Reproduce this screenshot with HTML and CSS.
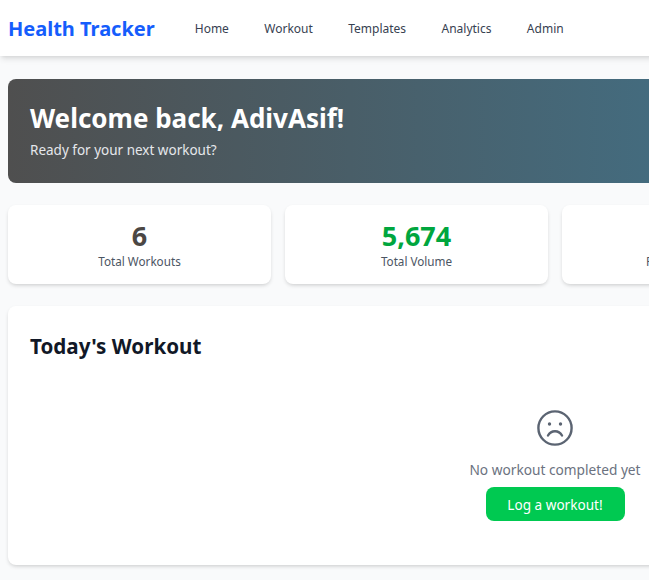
FILE: index.html
```html
<!DOCTYPE html>
<html lang="en">

<head>
    <meta charset="UTF-8">
    <meta name="viewport" content="width=device-width, initial-scale=1.0">
    <title>Health Tracker</title>
    <link rel="stylesheet" href="styles.css">
</head>

<body>
    <div class="page">
        <nav class="navbar">
            <a class="brand" href="#">Health Tracker</a>
            <div class="nav-links">
                <a href="#">Home</a>
                <a href="#">Workout</a>
                <a href="#">Templates</a>
                <a href="#">Analytics</a>
                <a href="#">Admin</a>
            </div>
        </nav>

        <main class="main-content">
            <section class="hero">
                <h1>Welcome back, AdivAsif!</h1>
                <p>Ready for your next workout?</p>
            </section>

            <section class="stats">
                <div class="stat-card">
                    <div class="stat-value">6</div>
                    <div class="stat-label">Total Workouts</div>
                </div>
                <div class="stat-card">
                    <div class="stat-value stat-green">5,674</div>
                    <div class="stat-label">Total Volume</div>
                </div>
                <div class="stat-card">
                    <div class="stat-value">2</div>
                    <div class="stat-label">Personal Records</div>
                </div>
                <div class="stat-card">
                    <div class="stat-value">1</div>
                    <div class="stat-label">Day Streak</div>
                </div>
            </section>

            <section class="today">
                <h2>Today's Workout</h2>
                <div class="empty-state">
                    <svg class="sad-icon" viewBox="0 0 36 36" fill="none" stroke="#5b6472" stroke-width="2.4" stroke-linecap="round">
                        <circle cx="18" cy="18" r="16.6" />
                        <circle cx="12.5" cy="14" r="1.7" fill="#5b6472" stroke="none" />
                        <circle cx="23.5" cy="14" r="1.7" fill="#5b6472" stroke="none" />
                        <path d="M11 25.5c1.6-2.8 4-4.2 7-4.2s5.4 1.4 7 4.2" />
                    </svg>
                    <p>No workout completed yet</p>
                    <button>Log a workout!</button>
                </div>
            </section>
        </main>
    </div>
</body>

</html>
```

FILE: styles.css
```css
html,
body {
    margin: 0;
    height: 100%;
    overflow: hidden;
    background-color: #f9fafb;
}

body {
    font-family: "Noto Sans", "Open Sans", Arial, sans-serif;
}

.page {
    width: 1110px;
}

.navbar {
    display: flex;
    align-items: center;
    height: 56px;
    padding: 0 8px;
    background-color: #fff;
    box-shadow: 0 4px 6px -1px rgba(0, 0, 0, 0.1), 0 2px 4px -2px rgba(0, 0, 0, 0.1);
}

.brand {
    font-size: 20px;
    font-weight: 700;
    color: #155dfc;
    text-decoration: none;
    margin-right: 40px;
}

.nav-links {
    display: flex;
    gap: 35.4px;
}

.nav-links a {
    font-size: 12px;
    color: #374151;
    text-decoration: none;
}

.main-content {
    padding: 23px 8px 0;
}

.hero {
    height: 104px;
    box-sizing: border-box;
    padding: 22px;
    border-radius: 8px;
    color: #fff;
    background: linear-gradient(90deg, #4f4f4f, #3c7f9f);
    margin-bottom: 22px;
}

.hero h1 {
    margin: 0 0 6px;
    font-size: 26px;
    line-height: 34px;
}

.hero p {
    margin: 0;
    font-size: 13.5px;
    color: #e5e7eb;
}

.stats {
    display: grid;
    grid-template-columns: repeat(4, 1fr);
    gap: 14px;
    margin-bottom: 22px;
}

.stat-card {
    height: 79px;
    box-sizing: border-box;
    padding-top: 14px;
    text-align: center;
    background-color: #fff;
    border-radius: 8px;
    box-shadow: 0 2px 4px -1px rgba(0, 0, 0, 0.2);
}

.stat-value {
    font-size: 27px;
    line-height: 34px;
    font-weight: 700;
    color: #4b4744;
}

.stat-green {
    color: #00a63e;
}

.stat-label {
    font-size: 11.7px;
    color: #4b5563;
}

.today {
    height: 259px;
    box-sizing: border-box;
    padding: 22px;
    background-color: #fff;
    border-radius: 8px;
    box-shadow: 0 2px 4px -1px rgba(0, 0, 0, 0.2);
}

.today h2 {
    margin: 0;
    font-size: 20.6px;
    line-height: 36px;
    color: #111827;
}

.empty-state {
    display: flex;
    flex-direction: column;
    align-items: center;
    margin-top: 46px;
}

.sad-icon {
    width: 36px;
    height: 36px;
}

.empty-state p {
    margin: 14px 0 8px;
    font-size: 13.7px;
    color: #6b7280;
}

button {
    width: 139px;
    height: 34px;
    border: 0;
    border-radius: 8px;
    font-family: inherit;
    font-size: 13.6px;
    color: #fff;
    background-color: #00c951;
}
```
